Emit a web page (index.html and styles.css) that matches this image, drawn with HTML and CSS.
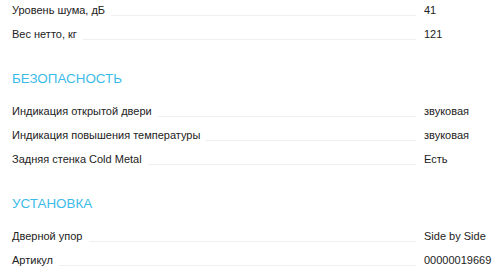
FILE: index.html
```html
<!DOCTYPE html>
<html lang="ru">
<head>
<meta charset="utf-8">
<link rel="stylesheet" href="styles.css">
</head>
<body>
<div class="specs">
  <div class="group first">
    <div class="row"><div class="name"><span>Уровень шума, дБ</span><i class="dots"></i></div><div class="val">41</div></div>
    <div class="row"><div class="name"><span>Вес нетто, кг</span><i class="dots"></i></div><div class="val">121</div></div>
  </div>
  <h2 class="title">БЕЗОПАСНОСТЬ</h2>
  <div class="group">
    <div class="row"><div class="name"><span>Индикация открытой двери</span><i class="dots"></i></div><div class="val">звуковая</div></div>
    <div class="row"><div class="name"><span>Индикация повышения температуры</span><i class="dots"></i></div><div class="val">звуковая</div></div>
    <div class="row"><div class="name"><span>Задняя стенка Cold Metal</span><i class="dots"></i></div><div class="val">Есть</div></div>
  </div>
  <h2 class="title">УСТАНОВКА</h2>
  <div class="group">
    <div class="row"><div class="name"><span>Дверной упор</span><i class="dots"></i></div><div class="val">Side by Side</div></div>
    <div class="row"><div class="name"><span>Артикул</span><i class="dots"></i></div><div class="val">00000019669</div></div>
  </div>
</div>
</body>
</html>
```
FILE: styles.css
```css
html, body {
  margin: 0;
  padding: 0;
  background: #ffffff;
}
body {
  font-family: "Liberation Sans", Arial, sans-serif;
  color: #222222;
  overflow: hidden;
}
.specs {
  padding: 0 0 0 12px;
}
.group.first {
  margin-top: -2px;
}
.row {
  display: grid;
  grid-template-columns: 1fr 76px;
  height: 24px;
  line-height: 24px;
  font-size: 11px;
}
.name {
  display: flex;
  align-items: baseline;
  padding-right: 8px;
}
.name span {
  white-space: nowrap;
}
.dots {
  flex: 1;
  margin-left: 6px;
  border-bottom: 1px solid #efefef;
  position: relative;
  top: 2px;
}
.val {
  white-space: nowrap;
}
.title {
  margin: 23px 0 10px 0;
  font-size: 13.4px;
  line-height: 20px;
  font-weight: normal;
  color: #3bbbe8;
}
```
